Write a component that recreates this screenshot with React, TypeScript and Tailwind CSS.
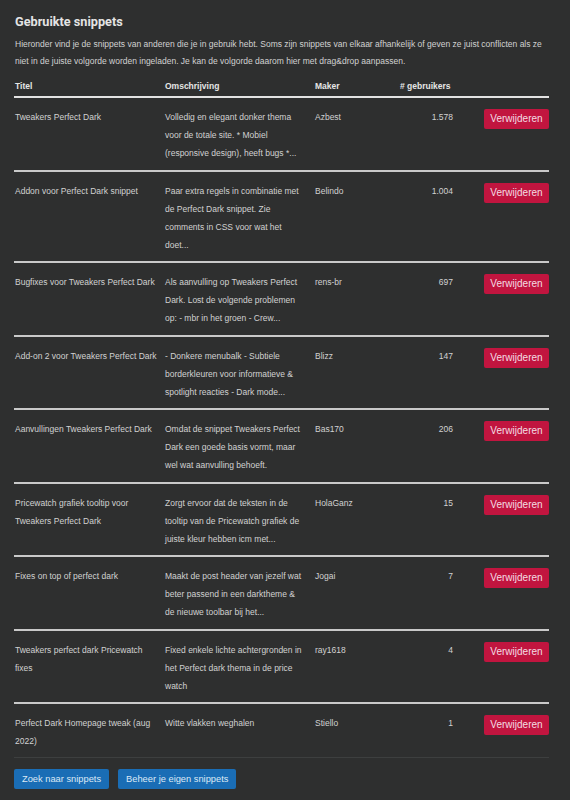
type Snippet = {
  title: string;
  description: string;
  maker: string;
  users: string;
};

const snippets: Snippet[] = [
  {
    title: "Tweakers Perfect Dark",
    description:
      "Volledig en elegant donker thema voor de totale site. * Mobiel (responsive design), heeft bugs *...",
    maker: "Azbest",
    users: "1.578",
  },
  {
    title: "Addon voor Perfect Dark snippet",
    description:
      "Paar extra regels in combinatie met de Perfect Dark snippet. Zie comments in CSS voor wat het doet...",
    maker: "Belindo",
    users: "1.004",
  },
  {
    title: "Bugfixes voor Tweakers Perfect Dark",
    description:
      "Als aanvulling op Tweakers Perfect Dark. Lost de volgende problemen op: - mbr in het groen - Crew...",
    maker: "rens-br",
    users: "697",
  },
  {
    title: "Add-on 2 voor Tweakers Perfect Dark",
    description:
      "- Donkere menubalk - Subtiele borderkleuren voor informatieve & spotlight reacties - Dark mode...",
    maker: "Blizz",
    users: "147",
  },
  {
    title: "Aanvullingen Tweakers Perfect Dark",
    description:
      "Omdat de snippet Tweakers Perfect Dark een goede basis vormt, maar wel wat aanvulling behoeft.",
    maker: "Bas170",
    users: "206",
  },
  {
    title: "Pricewatch grafiek tooltip voor Tweakers Perfect Dark",
    description:
      "Zorgt ervoor dat de teksten in de tooltip van de Pricewatch grafiek de juiste kleur hebben icm met...",
    maker: "HolaGanz",
    users: "15",
  },
  {
    title: "Fixes on top of perfect dark",
    description:
      "Maakt de post header van jezelf wat beter passend in een darktheme & de nieuwe toolbar bij het...",
    maker: "Jogai",
    users: "7",
  },
  {
    title: "Tweakers perfect dark Pricewatch fixes",
    description:
      "Fixed enkele lichte achtergronden in het Perfect dark thema in de price watch",
    maker: "ray1618",
    users: "4",
  },
  {
    title: "Perfect Dark Homepage tweak (aug 2022)",
    description: "Witte vlakken weghalen",
    maker: "Stiello",
    users: "1",
  },
];

function SnippetRow({ snippet, last }: { snippet: Snippet; last: boolean }) {
  return (
    <div
      className={
        last
          ? "flex items-start pt-[10px] pb-[7px] border-b border-[#3d3f3f] leading-[18px]"
          : "flex items-start pt-[10px] pb-[7.5px] border-b-2 border-[#c9c9c9] leading-[18px]"
      }
    >
      <div className="w-[150px] pl-px pr-[4px] shrink-0">{snippet.title}</div>
      <div className="w-[150px] pl-px pr-[9px] shrink-0">{snippet.description}</div>
      <div className="w-[86px] pl-px shrink-0">{snippet.maker}</div>
      <div className="w-[53px] text-right shrink-0">{snippet.users}</div>
      <div className="flex-1 flex justify-end">
        <button className="mt-px h-[20px] w-[65px] rounded-[2px] bg-[#c1153f] text-[10px] text-[#f3dde3] leading-[20px]">
          Verwijderen
        </button>
      </div>
    </div>
  );
}

export default function App() {
  return (
    <div className="min-h-[800px] w-[570px] bg-[#2e2f2f] font-['Liberation_Sans',Arial,sans-serif] text-[8.5px] text-[#d2d2d2]">
      <div className="ml-[14px] w-[535px] pt-[14px]">
        <h1 className="font-['Roboto',sans-serif] font-bold text-[12.7px] leading-[16px] text-[#e4e4e4] pl-px">
          Gebruikte snippets
        </h1>
        <p className="mt-[6px] leading-[17px] pl-px whitespace-nowrap">
          Hieronder vind je de snippets van anderen die je in gebruik hebt. Soms zijn snippets van elkaar
          afhankelijk of geven ze juist conflicten als ze
          <br />
          niet in de juiste volgorde worden ingeladen. Je kan de volgorde daarom hier met drag&amp;drop aanpassen.
        </p>

        <div className="mt-[8px] flex font-bold text-[#e6e6e6] leading-[17px] pb-px border-b-2 border-[#e2e2e2]">
          <div className="w-[150px] pl-px shrink-0">Titel</div>
          <div className="w-[150px] pl-px shrink-0">Omschrijving</div>
          <div className="w-[86px] pl-px shrink-0">Maker</div>
          <div className="w-[60px] shrink-0"># gebruikers</div>
        </div>

        {snippets.map((s, i) => (
          <SnippetRow key={s.title} snippet={s} last={i === snippets.length - 1} />
        ))}

        <div className="mt-[11px] flex gap-[9px]">
          <button className="h-[20px] px-[8px] rounded-[2px] bg-[#1a6db5] text-[9.3px] text-[#dce9f5] leading-[20px]">
            Zoek naar snippets
          </button>
          <button className="h-[20px] px-[8px] rounded-[2px] bg-[#1a6db5] text-[9.3px] text-[#dce9f5] leading-[20px]">
            Beheer je eigen snippets
          </button>
        </div>
      </div>
    </div>
  );
}
